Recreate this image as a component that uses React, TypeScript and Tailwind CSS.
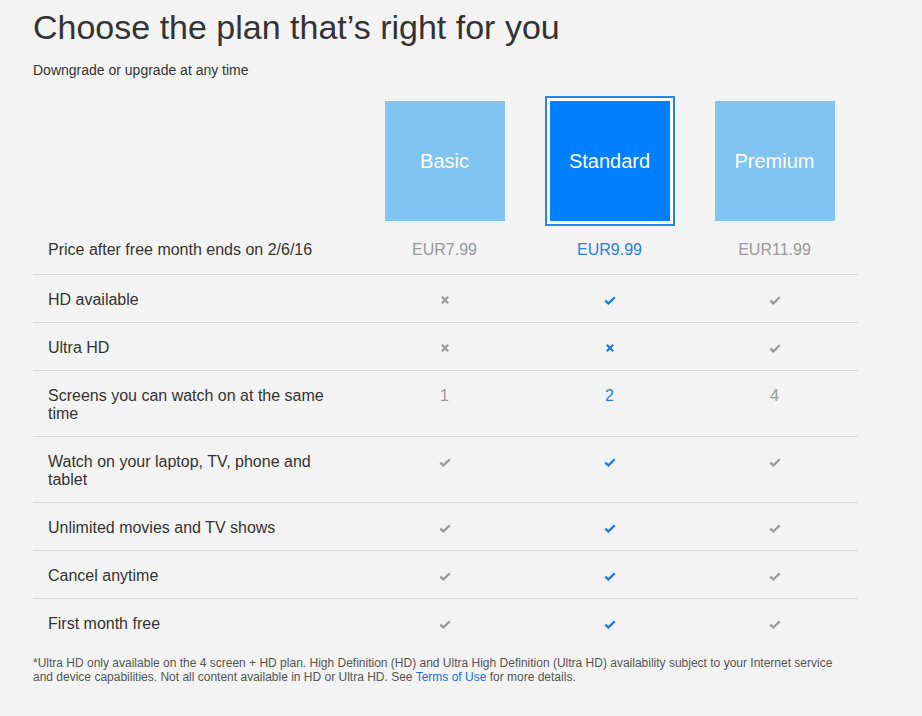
import type { ReactNode } from 'react'

const Check = ({ blue }: { blue?: boolean }) => (
  <svg width="12" height="9" viewBox="0 0 12 9" className={blue ? 'text-[#1f78e4]' : 'text-[#9a9a9a]'}>
    <path d="M1.2 4.6 L4.4 7.4 L10.8 1.2" fill="none" stroke="currentColor" strokeWidth="2.2" />
  </svg>
)

const Cross = ({ blue }: { blue?: boolean }) => (
  <svg width="10" height="10" viewBox="0 0 10 10" className={blue ? 'text-[#1f78e4]' : 'text-[#9a9a9a]'}>
    <path d="M1.8 1.8 L8.2 8.2 M8.2 1.8 L1.8 8.2" fill="none" stroke="currentColor" strokeWidth="2.2" />
  </svg>
)

type Cell = 'check' | 'cross' | string

const rows: { label: string; cells: [Cell, Cell, Cell] }[] = [
  { label: 'HD available', cells: ['cross', 'check', 'check'] },
  { label: 'Ultra HD', cells: ['cross', 'cross', 'check'] },
  { label: 'Screens you can watch on at the same time', cells: ['1', '2', '4'] },
  { label: 'Watch on your laptop, TV, phone and tablet', cells: ['check', 'check', 'check'] },
  { label: 'Unlimited movies and TV shows', cells: ['check', 'check', 'check'] },
  { label: 'Cancel anytime', cells: ['check', 'check', 'check'] },
  { label: 'First month free', cells: ['check', 'check', 'check'] },
]

function renderCell(c: Cell, blue: boolean): ReactNode {
  if (c === 'check') return <Check blue={blue} />
  if (c === 'cross') return <Cross blue={blue} />
  return <span className={blue ? 'text-[#2a7fe2]' : 'text-[#999]'}>{c}</span>
}

export default function App() {
  return (
    <div
      className="min-h-screen bg-[#f3f3f3] text-[#333] px-[33px] pt-[7px]"
      style={{ fontFamily: '"Liberation Sans", Arial, sans-serif' }}
    >
      <h1 className="text-[34px] leading-[40px]">Choose the plan that’s right for you</h1>
      <div className="mt-[13px] text-[14px] leading-[20px]">Downgrade or upgrade at any time</div>

      <div className="mt-[16px] w-[825px]">
        <div className="grid grid-cols-[329px_165px_165px_165px] items-center h-[130px]">
          <div />
          <div className="flex justify-center">
            <div className="w-[120px] h-[120px] bg-[#80c4f2] flex items-center justify-center text-white text-[20px]">
              Basic
            </div>
          </div>
          <div className="flex justify-center">
            <div className="w-[130px] h-[130px] border-2 border-[#2886e8] bg-white p-[3px]">
              <div className="w-full h-full bg-[#0080ff] flex items-center justify-center text-white text-[20px]">
                Standard
              </div>
            </div>
          </div>
          <div className="flex justify-center">
            <div className="w-[120px] h-[120px] bg-[#80c4f2] flex items-center justify-center text-white text-[20px]">
              Premium
            </div>
          </div>
        </div>

        <div className="grid grid-cols-[329px_165px_165px_165px] items-center pt-[15px] pb-[15px] text-[16px] leading-[18px]">
          <div className="pl-[15px]">Price after free month ends on 2/6/16</div>
          <div className="text-center text-[#999]">EUR7.99</div>
          <div className="text-center text-[#2a7fe2]">EUR9.99</div>
          <div className="text-center text-[#999]">EUR11.99</div>
        </div>

        {rows.map((r) => (
          <div
            key={r.label}
            className="grid grid-cols-[329px_165px_165px_165px] items-start border-t border-[#d6d6d6] pt-[16px] pb-[13px] text-[16px] leading-[18px]"
          >
            <div className="pl-[15px] pr-[22px]">{r.label}</div>
            <div className="flex justify-center items-center h-[18px]">{renderCell(r.cells[0], false)}</div>
            <div className="flex justify-center items-center h-[18px]">{renderCell(r.cells[1], true)}</div>
            <div className="flex justify-center items-center h-[18px]">{renderCell(r.cells[2], false)}</div>
          </div>
        ))}
      </div>

      <p className="mt-[10px] text-[12px] leading-[14px] text-[#555] w-[840px]">
        *Ultra HD only available on the 4 screen + HD plan. High Definition (HD) and Ultra High Definition (Ultra HD) availability subject to your Internet service
        <br />
        and device capabilities. Not all content available in HD or Ultra HD. See{' '}
        <a className="text-[#1a6fd6]">Terms of Use</a> for more details.
      </p>
    </div>
  )
}
